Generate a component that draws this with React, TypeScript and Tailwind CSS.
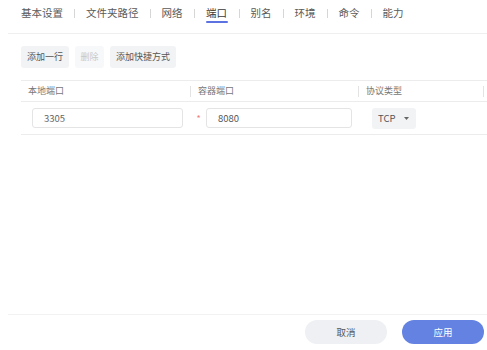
import { Fragment } from "react";

const tabs = ["基本设置", "文件夹路径", "网络", "端口", "别名", "环境", "命令", "能力"];

export default function App() {
	return (
		<div className="w-[487px] h-[350px] bg-white flex flex-col overflow-hidden font-['Noto_Sans_CJK_SC','Noto_Sans',sans-serif]">
			{/* Tabs */}
			<div className="ml-[8px] h-[34px] shrink-0 border-b border-[#efefef] pl-[13px] flex items-start pt-[5px]">
				{tabs.map((t, i) => (
					<Fragment key={t}>
						{i > 0 && <div className="mx-[11px] mt-[4px] w-px h-[9px] bg-[#d6d6d6]"></div>}
						<div className="flex flex-col items-center">
							<span className={`text-[10.5px] leading-[16px] ${t === "端口" ? "text-[#3a3a3a]" : "text-[#5a5a5a]"}`}>{t}</span>
							{t === "端口" && <div className="h-[2px] w-[22px] bg-[#5b72e0] rounded-full"></div>}
						</div>
					</Fragment>
				))}
			</div>

			{/* Toolbar */}
			<div className="pl-[21px] mt-[12px] flex gap-[6px]">
				<button className="h-[22px] px-[6px] rounded-[3px] bg-[#f2f3f5] text-[9px] text-[#555]">添加一行</button>
				<button className="h-[22px] w-[29px] rounded-[3px] bg-[#f7f8fa] text-[9px] text-[#c8c8c8]">删除</button>
				<button className="h-[22px] px-[6px] rounded-[3px] bg-[#f2f3f5] text-[9px] text-[#555]">添加快捷方式</button>
			</div>

			{/* Table */}
			<div className="ml-[21px] mt-[12px] w-[466px] border-t border-[#ececec]">
				<div className="h-[21px] flex items-center border-b border-[#ececec] text-[9px] text-[#777]">
					<div className="w-[169px] pl-[7px]">本地端口</div>
					<div className="w-px h-[11px] bg-[#e3e3e3]"></div>
					<div className="w-[167px] pl-[7px]">容器端口</div>
					<div className="w-px h-[11px] bg-[#e3e3e3]"></div>
					<div className="w-[124px] pl-[7px]">协议类型</div>
					<div className="w-px h-[11px] bg-[#e3e3e3]"></div>
				</div>
				<div className="h-[33px] flex items-center border-b border-[#ececec]">
					<div className="w-[170px] pl-[11px] pr-[8px]">
						<div className="h-[20px] border border-[#e4e4e4] rounded-[3px] flex items-center pl-[11px] text-[9.5px] text-[#666]">3305</div>
					</div>
					<div className="w-[168px] flex items-center pr-[7px]">
						<span className="w-[15px] text-center text-[9px] text-[#f07c7c] leading-none">*</span>
						<div className="flex-1 h-[20px] border border-[#e4e4e4] rounded-[3px] flex items-center pl-[11px] text-[9.5px] text-[#555]">8080</div>
					</div>
					<div className="pl-[13px]">
						<div className="w-[44px] h-[21px] rounded-[3px] bg-[#f2f3f5] flex items-center pl-[6px] gap-[8px] text-[9.5px] text-[#555]">
							<span>TCP</span>
							<svg width="5" height="3" viewBox="0 0 5 3"><path d="M0 0h5L2.5 3z" fill="#666" /></svg>
						</div>
					</div>
				</div>
			</div>

			<div className="flex-1"></div>

			{/* Footer */}
			<div className="ml-[8px] h-[36px] shrink-0 border-t border-[#f2f2f2] flex items-start justify-end pt-[5px] pr-[3px] gap-[15px]">
				<button className="w-[82px] h-[24px] rounded-full bg-[#eef0f4] text-[9.5px] text-[#555]">取消</button>
				<button className="w-[82px] h-[24px] rounded-full bg-[#6382e2] text-[9.5px] text-white">应用</button>
			</div>
		</div>
	);
}
